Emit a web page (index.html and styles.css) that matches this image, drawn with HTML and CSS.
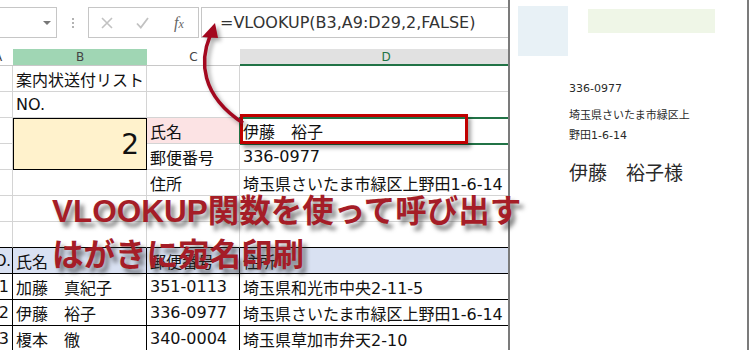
FILE: index.html
```html
<!DOCTYPE html>
<html lang="ja">
<head>
    <meta charset="UTF-8">
    <title>VLOOKUP 宛名印刷</title>
    <link rel="stylesheet" href="styles.css">
</head>
<body>
<div class="page">
    <div class="excel">
        <!-- 数式バー -->
        <div class="fbar">
            <div class="namebox"><span class="drop"></span></div>
            <svg class="grip" width="4" height="31" viewBox="0 0 4 31">
                <rect x="1" y="11" width="2" height="2" fill="#b3b3b3"/>
                <rect x="1" y="15" width="2" height="2" fill="#b3b3b3"/>
                <rect x="1" y="19" width="2" height="2" fill="#b3b3b3"/>
            </svg>
            <div class="btns">
                <svg class="b-x" width="12" height="12" viewBox="0 0 12 12">
                    <path d="M1 1 L11 11 M11 1 L1 11" stroke="#c2c2c2" stroke-width="1.6" fill="none"/>
                </svg>
                <svg class="b-ok" width="13" height="12" viewBox="0 0 13 12">
                    <path d="M1 6.5 L4.8 10.5 L12 1" stroke="#c2c2c2" stroke-width="1.8" fill="none"/>
                </svg>
                <span class="fx">f<span class="fx-x">x</span></span>
            </div>
            <div class="formula">=VLOOKUP(B3,A9:D29,2,FALSE)</div>
        </div>

        <!-- シート -->
        <div class="sheet">
            <div class="ch ch-a"><span>A</span></div>
            <div class="ch ch-b">B</div>
            <div class="ch">C</div>
            <div class="ch ch-d">D</div>

            <div class="c a"></div><div class="c">案内状送付リスト</div><div class="c"></div><div class="c"></div>
            <div class="c a"></div><div class="c">NO.</div><div class="c"></div><div class="c"></div>

            <div class="c a"></div><div class="c key">2</div><div class="c pink">氏名</div><div class="c sel">伊藤　裕子</div>
            <div class="c a"></div><div class="c">郵便番号</div><div class="c">336-0977</div>
            <div class="c a"></div><div class="c"></div><div class="c">住所</div><div class="c">埼玉県さいたま市緑区上野田1-6-14</div>
            <div class="c a"></div><div class="c"></div><div class="c"></div><div class="c"></div>
            <div class="c a edge"></div><div class="c edge"></div><div class="c edge"></div><div class="c edge"></div>

            <div class="c a t th">NO.</div><div class="c t th">氏名</div><div class="c t th">郵便番号</div><div class="c t th">住所</div>
            <div class="c a t">1</div><div class="c t">加藤　真紀子</div><div class="c t">351-0113</div><div class="c t">埼玉県和光市中央2-11-5</div>
            <div class="c a t">2</div><div class="c t">伊藤　裕子</div><div class="c t">336-0977</div><div class="c t">埼玉県さいたま市緑区上野田1-6-14</div>
            <div class="c a t">3</div><div class="c t">榎本　徹</div><div class="c t">340-0004</div><div class="c t">埼玉県草加市弁天2-10</div>
        </div>
    </div>

    <!-- はがき -->
    <div class="card">
        <div class="card-top">
            <div class="stamp"></div>
            <div class="zipbox"></div>
        </div>
        <div class="addr">
            <div class="zip">336-0977</div>
            <div class="line1">埼玉県さいたま市緑区上</div>
            <div class="line2">野田1-6-14</div>
            <div class="name">伊藤　裕子様</div>
        </div>
    </div>

    <!-- 注釈 -->
    <div class="frame"></div>
    <svg class="arrow" width="750" height="350" viewBox="0 0 750 350">
        <path d="M210 36 C200 60, 200 95, 243 123" stroke="#a3081f" stroke-width="3.5" fill="none"/>
        <polygon points="215,23 202,37 218,38" fill="#a3081f"/>
    </svg>
    <div class="headline">VLOOKUP関数を使って呼び出す<br>はがきに宛名印刷</div>
</div>
</body>
</html>
```

FILE: styles.css
```css
body{
    margin: 0;
    background: #fff;
}
.page{
    width: 750px;
    height: 350px;
    position: relative;
    overflow: hidden;
    display: flex;
    font-family: "DejaVu Sans", "Noto Sans CJK JP", sans-serif;
    color: #111;
}
.excel{
    width: 508px;
    flex: 0 0 auto;
    overflow: hidden;
}

/* 数式バー */
.fbar{
    height: 49px;
    box-sizing: border-box;
    padding-top: 7px;
    display: flex;
    align-items: flex-start;
}
.namebox{
    width: 58px;
    height: 31px;
    box-sizing: border-box;
    margin-left: -1px;
    border: 1px solid #c6c6c6;
    display: flex;
    align-items: center;
    justify-content: flex-end;
    padding-right: 5px;
}
.drop{
    width: 0;
    height: 0;
    border-left: 4px solid transparent;
    border-right: 4px solid transparent;
    border-top: 4px solid #777;
}
.grip{
    margin-left: 14px;
}
.btns{
    margin-left: 13px;
    width: 111px;
    height: 31px;
    box-sizing: border-box;
    border: 1px solid #c6c6c6;
    display: flex;
    align-items: center;
}
.b-x{
    margin-left: 12px;
}
.b-ok{
    margin-left: 23px;
}
.fx{
    margin-left: 25px;
    font-family: "Liberation Serif", serif;
    font-style: italic;
    font-size: 16px;
    color: #666;
}
.fx-x{
    font-size: 12px;
}
.formula{
    flex: 1;
    margin-left: 2px;
    height: 31px;
    box-sizing: border-box;
    border: 1px solid #c6c6c6;
    border-right: none;
    padding-left: 18px;
    font-size: 16px;
    line-height: 29px;
    color: #333;
    white-space: nowrap;
}

/* シート */
.sheet{
    display: grid;
    grid-template-columns: 13px 134px 93px 292px;
    grid-template-rows: 17px repeat(11, 26px);
}
.ch{
    font-size: 12px;
    color: #444;
    display: flex;
    align-items: center;
    justify-content: center;
    border-bottom: 1px solid #c8c8c8;
    box-sizing: border-box;
    overflow: hidden;
}
.ch-a{
    justify-content: flex-start;
}
.ch-a span{
    margin-left: -6px;
}
.ch-b{
    background: #a0d6b4;
}
.ch-d{
    background: #e1e1e1;
    color: #217346;
    border-bottom: 2px solid #217346;
}
.c{
    box-sizing: border-box;
    border-right: 1px solid #d4d4d4;
    border-bottom: 1px solid #d4d4d4;
    padding-left: 3px;
    display: flex;
    align-items: center;
    font-size: 16px;
    white-space: nowrap;
    overflow: hidden;
}
.a{
    padding-left: 0;
    padding-right: 3px;
    justify-content: flex-end;
}
.key{
    grid-row: span 2;
    border: 1px solid #000;
    background: #fff2cc;
    justify-content: flex-end;
    padding-right: 7px;
    font-size: 28px;
}
.pink{
    background: #fce3e4;
}
.sel{
    outline: 2px solid #217346;
    outline-offset: -1px;
}
.edge{
    border-bottom-color: #000;
}
.t{
    border-right-color: #000;
    border-bottom-color: #000;
}
.th{
    background: #d9e1f2;
}
.a.th{
    padding-right: 1px;
}

/* はがき */
.card{
    width: 241px;
    flex: 0 0 auto;
    box-sizing: border-box;
    margin-right: 1px;
    border-left: 2px solid #7b7b7b;
    border-right: 2px solid #7b7b7b;
    padding-top: 6px;
    color: #2a2a2a;
}
.card-top{
    display: flex;
    align-items: flex-start;
}
.stamp{
    width: 50px;
    height: 50px;
    margin-left: 8px;
    background: #e8f1f6;
}
.zipbox{
    width: 127px;
    height: 24px;
    margin-left: 20px;
    margin-top: 3px;
    background: #eff6e7;
}
.addr{
    margin-left: 59px;
    margin-top: 23px;
    font-size: 11px;
}
.zip, .line1, .line2{
    line-height: 20px;
}
.line1{
    margin-top: 7px;
}
.name{
    margin-top: 13px;
    font-family: "Noto Sans CJK JP", sans-serif;
    font-size: 19px;
    line-height: 26px;
}

/* 注釈 */
.frame{
    position: absolute;
    left: 240px;
    top: 114px;
    width: 228px;
    height: 30px;
    box-sizing: border-box;
    border: 3px solid #c00000;
    box-shadow: 3px 4px 4px rgba(0,0,0,0.35);
}
.arrow{
    position: absolute;
    left: 0;
    top: 0;
    filter: drop-shadow(3px 3px 2px rgba(0,0,0,0.35));
}
.headline{
    position: absolute;
    left: 52px;
    top: 189px;
    font-family: "Liberation Sans", "Noto Sans CJK JP", sans-serif;
    font-weight: 700;
    font-size: 31.5px;
    line-height: 44px;
    color: #a51d27;
    text-shadow: 4px 5px 4px rgba(50,50,50,0.6);
    white-space: nowrap;
}
```
